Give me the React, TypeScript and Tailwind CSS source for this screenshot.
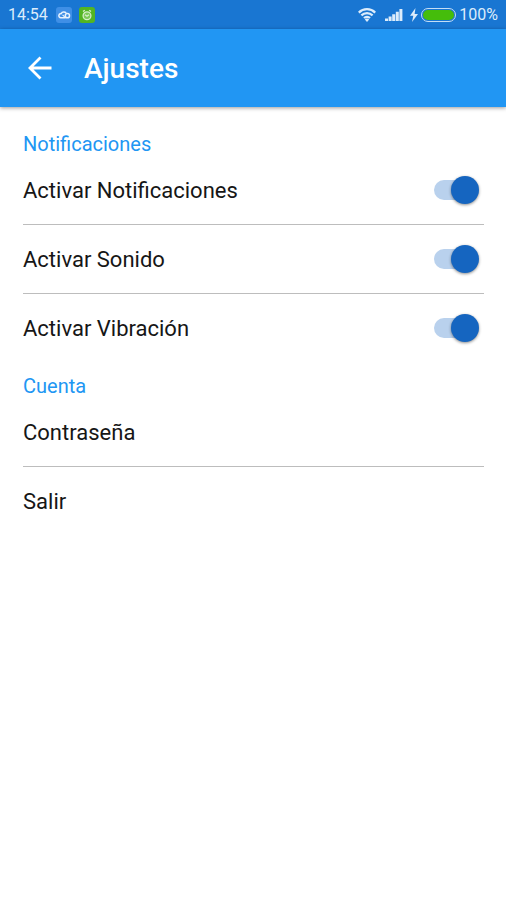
import { useState } from "react";

interface SwitchRowProps {
  id: string;
  label: string;
}

const notificationItems: SwitchRowProps[] = [
  { id: "notifications", label: "Activar Notificaciones" },
  { id: "sound", label: "Activar Sonido" },
  { id: "vibration", label: "Activar Vibración" },
];

const accountItems = ["Contraseña", "Salir"];

function StatusBar() {
  return (
    <div className="flex h-[29px] items-center bg-[#1976d2] px-2 pt-px text-[16px] leading-7 text-[#dcecfb]">
      <span>14:54</span>
      <svg className="ml-2 h-4 w-4 shrink-0" viewBox="0 0 16 16" aria-hidden="true">
        <rect width="16" height="16" rx="3" fill="#3f8fe6" />
        <path
          d="M9.5 10.8H4.700a2.1 2.1 0 1 1 .5-4.200 3 3 0 0 1 5-.5"
          fill="none"
          stroke="#e8f3fd"
          strokeWidth="1.5"
        />
        <circle cx="11.4" cy="8.7" r="2.1" fill="none" stroke="#e8f3fd" strokeWidth="1.5" />
        <path d="m6.6 7.8 3 3" stroke="#e8f3fd" strokeWidth="1.2" />
      </svg>
      <svg className="ml-[7px] h-4 w-4 shrink-0" viewBox="0 0 16 16" aria-hidden="true">
        <rect width="16" height="16" rx="3" fill="#53b522" />
        <circle cx="8" cy="8.7" r="3.9" fill="#7cc957" stroke="#d5efc8" strokeWidth="1.3" />
        <path
          d="m4 4.600 1.800-1.400M12 4.600l-1.800-1.400M6 7.800l2 1.500 2-1.500"
          fill="none"
          stroke="#d5efc8"
          strokeWidth="1.3"
        />
      </svg>

      <div className="ml-auto flex items-center">
        {/* Wifi */}
        <svg className="h-[14px] w-[18px]" viewBox="0 0 18 14" fill="none" stroke="#dcecfb" strokeWidth="2.2" aria-hidden="true">
          <path d="M.8 4.6a11.6 11.6 0 0 1 16.4 0M3.4 7.4a7.9 7.9 0 0 1 11.2 0M6 10.1a4.200 4.200 0 0 1 6 0" />
          <path d="m9 14-2.200-2.400a3 3 0 0 1 4.400 0Z" fill="#dcecfb" stroke="none" />
        </svg>
        {/* Signal */}
        <svg className="ml-[9px] h-[14px] w-[18px]" viewBox="0 0 18 14" fill="#dcecfb" aria-hidden="true">
          <path d="M0 10.5h3V13H0zM3.6 8.5h3V13h-3zM7.2 6.200h3V13h-3zM10.8 3.700h3V13h-3zM14.4 1h3v12h-3z" />
        </svg>
        {/* Charging */}
        <svg className="ml-[7px] h-[14px] w-2" viewBox="0 0 8 14" fill="#dcecfb" aria-hidden="true">
          <path d="M5.5 0 0 7.800h3.300L2 14l6-8H4.600Z" />
        </svg>
        <div className="ml-[3px] h-[14px] w-[35px] rounded-full border border-[#c5def5] p-px">
          <div className="h-full rounded-full bg-[#45bd0b]" />
        </div>
        <span className="ml-[3px]">100%</span>
      </div>
    </div>
  );
}

function SwitchRow({ id, label }: SwitchRowProps) {
  const [enabled, setEnabled] = useState(true);

  return (
    <li className="border-b border-[#bdbdbd] last:border-b-0">
      <label htmlFor={id} className="flex h-[68px] cursor-pointer items-center justify-between pr-[5px]">
        <span className="pt-0.5">{label}</span>
        <span className="relative flex h-7 w-[45px] items-center">
          <input
            id={id}
            type="checkbox"
            role="switch"
            checked={enabled}
            onChange={(e) => setEnabled(e.target.checked)}
            className="peer absolute inset-0 cursor-pointer opacity-0"
          />
          <span className="h-5 w-10 rounded-full bg-gray-300 peer-checked:bg-[#b9d1ed]" />
          <span className="absolute left-0 h-7 w-7 rounded-full bg-gray-50 shadow-[0_1px_3px_rgba(0,0,0,0.45)] peer-checked:left-auto peer-checked:right-0 peer-checked:bg-[#1565c0]" />
        </span>
      </label>
    </li>
  );
}

export default function App() {
  return (
    <div className="min-h-screen bg-white font-[Roboto,sans-serif] text-[#161616]">
      <StatusBar />
      <header className="flex h-[78px] items-center bg-[#2196f3] px-7 text-white shadow-[0_1px_4px_rgba(0,0,0,0.4)]">
        <button type="button" aria-label="Volver" className="cursor-pointer">
          <svg className="h-6 w-6" viewBox="0 0 24 24" fill="none" stroke="currentColor" strokeWidth="2.8" aria-hidden="true">
            <path d="M23.5 12H3M12.5 1.5 2 12l10.5 10.5" />
          </svg>
        </button>
        <h1 className="ml-8 pt-0.5 text-[28px] font-medium leading-8">Ajustes</h1>
      </header>

      <main className="pl-[23px] pr-[22px] pt-[13px] text-[22px] leading-7">
        <section>
          <h2 className="pt-3 text-[20px] leading-6 text-[#2196f3]">Notificaciones</h2>
          <ul>
            {notificationItems.map((item) => (
              <SwitchRow key={item.id} {...item} />
            ))}
          </ul>
        </section>

        <section>
          <h2 className="pt-3 text-[20px] leading-6 text-[#2196f3]">Cuenta</h2>
          <ul>
            {accountItems.map((item) => (
              <li key={item} className="border-b border-[#bdbdbd] last:border-b-0">
                <button type="button" className="flex h-[68px] w-full cursor-pointer items-center pt-0.5 text-left">
                  {item}
                </button>
              </li>
            ))}
          </ul>
        </section>
      </main>
    </div>
  );
}
